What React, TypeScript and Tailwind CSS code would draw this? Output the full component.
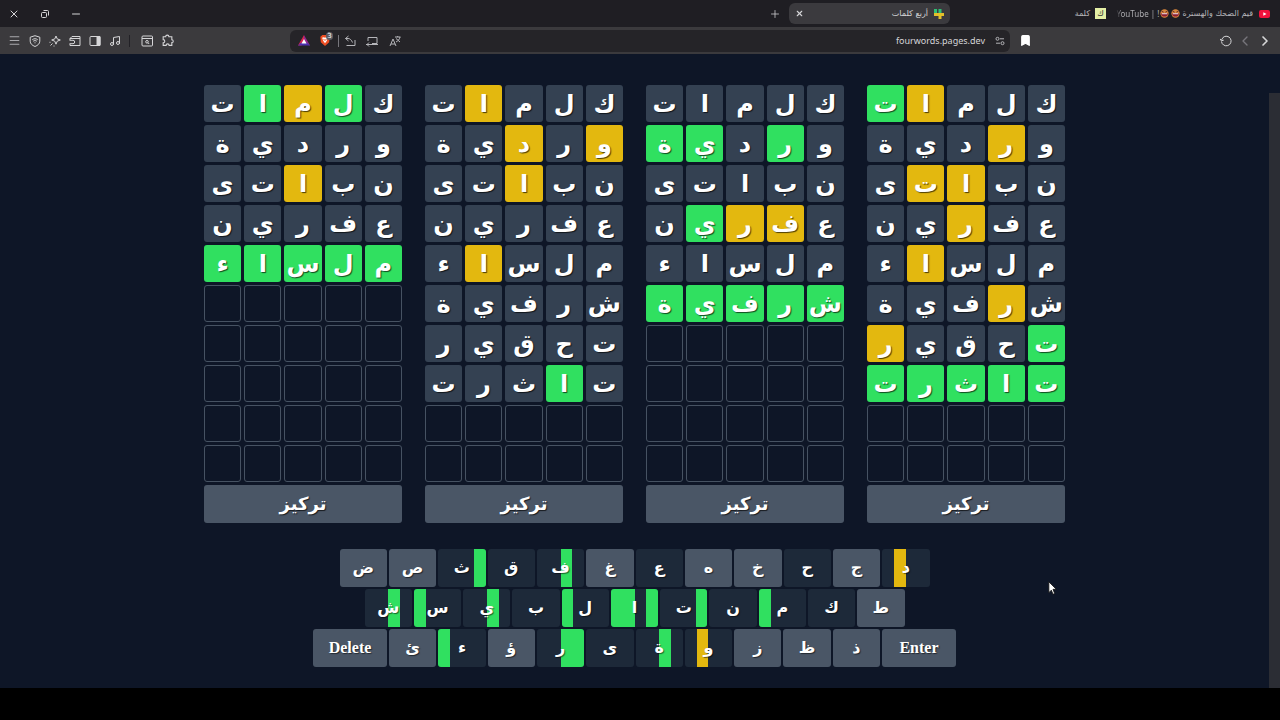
import React from 'react';
import { Bookmark, ChevronLeft, ChevronRight, Menu, Minus, Music, Plus, X } from 'lucide-react';

type Mark = 'g' | 'y' | '-';

interface BoardData {
  rows: number;
  marks: string[];
}

interface KeyData {
  label: string;
  // one entry per board quarter, left to right
  marks?: string;
}

const ROW_COUNT = 10;

const guesses = ['كلمات', 'وردية', 'نباتى', 'عفرين', 'ملساء', 'شرفية', 'تحقير', 'تاثرت'];

// Marks follow the letters of each guess, right to left on screen.
const boards: BoardData[] = [
  { rows: 8, marks: ['---yg', '-y---', '--yy-', '--y--', '---y-', '-y---', 'g---y', 'ggggg'] },
  { rows: 6, marks: ['-----', '-g-gg', '-----', '-yyg-', '-----', 'ggggg'] },
  { rows: 8, marks: ['---y-', 'y-y--', '--y--', '-----', '---y-', '-----', '-----', '-g---'] },
  { rows: 5, marks: ['-gyg-', '-----', '--y--', '-----', 'ggggg'] },
];

const keyRows: KeyData[][] = [
  [
    { label: 'د', marks: '-y--' },
    { label: 'ج' },
    { label: 'ح', marks: '----' },
    { label: 'خ' },
    { label: 'ه' },
    { label: 'ع', marks: '----' },
    { label: 'غ' },
    { label: 'ف', marks: '--g-' },
    { label: 'ق', marks: '----' },
    { label: 'ث', marks: '---g' },
    { label: 'ص' },
    { label: 'ض' },
  ],
  [
    { label: 'ط' },
    { label: 'ك', marks: '----' },
    { label: 'م', marks: 'g---' },
    { label: 'ن', marks: '----' },
    { label: 'ت', marks: '---g' },
    { label: 'ا', marks: 'gg-g' },
    { label: 'ل', marks: 'g---' },
    { label: 'ب', marks: '----' },
    { label: 'ي', marks: '--g-' },
    { label: 'س', marks: 'g---' },
    { label: 'ش', marks: '--g-' },
  ],
  [
    { label: 'Enter' },
    { label: 'ذ' },
    { label: 'ظ' },
    { label: 'ز' },
    { label: 'و', marks: '-y--' },
    { label: 'ة', marks: '--g-' },
    { label: 'ى', marks: '----' },
    { label: 'ر', marks: '--gg' },
    { label: 'ؤ' },
    { label: 'ء', marks: 'g---' },
    { label: 'ئ' },
    { label: 'Delete' },
  ],
];

const keyRowWidths = ['max-w-[590px]', 'max-w-[540px]', 'max-w-[643px]'];

const tileColors: Record<Mark, string> = {
  g: 'bg-[#30e060]',
  y: 'bg-[#e3b80f]',
  '-': 'bg-[#344152]',
};

const stripeColors: Record<Mark, string> = {
  g: 'bg-[#30e060]',
  y: 'bg-[#e3b80f]',
  '-': 'bg-transparent',
};

const LaughFace = () => (
  <svg viewBox="0 0 10 10" className="h-[9px] w-[9px] shrink-0">
    <circle cx="5" cy="5" r="4.6" fill="#d9873c" />
    <path d="M1.2 4.6h7.600a3.800 3.800 0 0 1-7.600 0z" fill="#8c1d33" />
    <path d="M2 4.800h6v1H2z" fill="#fff" />
    <path d="M1.800 2.500l2.200 1M8.200 2.500l-2.200 1" stroke="#52202a" />
  </svg>
);

const TabStrip = () => (
  <div dir="ltr" className="flex h-[27px] items-center bg-[#1f1e23] text-[#d6d6d8]">
    <div className="flex w-[90px] items-center gap-[19px] pl-2">
      <button type="button" aria-label="Close window">
        <X className="h-3 w-3" />
      </button>
      <button type="button" aria-label="Restore window">
        <svg viewBox="0 0 12 12" className="h-3 w-3" fill="none" stroke="currentColor">
          <rect x="2.5" y="4.5" width="5" height="5" rx="1" />
          <path d="M4.5 2.5h4a1 1 0 0 1 1 1v4" />
        </svg>
      </button>
      <button type="button" aria-label="Minimize window">
        <Minus className="h-3 w-3" />
      </button>
    </div>
    <div className="flex-1" />
    <button type="button" aria-label="New tab" className="mr-2">
      <Plus className="h-3 w-3" strokeWidth={1.5} />
    </button>
    <div className="flex h-[21px] w-[161px] items-center rounded-md bg-[#3b3a3e] px-[6px]">
      <button type="button" aria-label="Close tab">
        <X className="h-[9px] w-[9px]" strokeWidth={3} />
      </button>
      <span dir="rtl" className="ml-auto text-[8px]">أربع كلمات</span>
      <svg viewBox="0 0 10 10" className="ml-[6px] h-[10px] w-[10px]">
        <path d="M0 0h3v4H0zM4.500 0h3v4h-3z" fill="#2fbf74" />
        <path d="M0 4h10v3H7.500v3h-3V7H0z" fill="#e3c02a" />
      </svg>
    </div>
    <div className="flex w-[156px] items-center justify-end gap-[5px] text-[8px] text-[#b5b5b9]">
      <span dir="rtl">كلمة</span>
      <span className="flex h-[11px] w-[11px] items-center justify-center bg-[#e4efa5] text-[8px] text-[#333]">ك</span>
    </div>
    <div className="flex w-[174px] items-center justify-end pr-[10px] text-[8px] text-[#b5b5b9]">
      <span className="font-['Noto_Sans',sans-serif] whitespace-nowrap">
        <span className="bg-gradient-to-r from-[#1f1e23] to-[#b5b5b9] to-15% bg-clip-text text-transparent">YouTube |</span> !
      </span>
      <span className="ml-[1px] flex gap-[2px]">
        <LaughFace />
        <LaughFace />
      </span>
      <span dir="rtl" className="mr-[6px] ml-[2px] whitespace-nowrap">قيم الضحك والهسترة</span>
      <svg viewBox="0 0 11 8" className="h-2 w-[11px] shrink-0">
        <rect width="11" height="8" rx="2" fill="#f0123c" />
        <path d="M4.3 2.2v3.6L7.5 4z" fill="#fff" />
      </svg>
    </div>
  </div>
);

const BraveShield = () => (
  <span className="relative flex">
    <svg viewBox="0 0 12 14" className="h-[13px] w-3">
      <path d="M3.200 1h5.600l2.200 2-.5 6L6 13 1.500 9 1 3z" fill="#ee4e23" />
      <path d="M2.800 4l2-.5L6 4l1.200-.5 2 .5-1.400 3.600L6 10 4.200 7.600z" fill="#fff" />
      <path d="M4.300 5.300L6 7l1.700-1.700" stroke="#ee4e23" fill="none" />
    </svg>
    <span className="absolute -top-[2px] left-[7px] flex h-2 w-[7px] items-center justify-center rounded-sm bg-[#5d5c62] text-[7px] leading-none text-white">
      3
    </span>
  </span>
);

const Toolbar = () => (
  <div dir="ltr" className="flex h-[27px] items-center bg-[#3b3a3d] text-[#d6d6d8]">
    <div className="flex w-[290px] items-center gap-2 pl-2">
      <button type="button" aria-label="Menu">
        <Menu className="h-[13px] w-[13px] text-[#a9a9ad]" />
      </button>
      <button type="button" aria-label="VPN">
        <svg viewBox="0 0 12 12" className="h-3 w-3" fill="none" stroke="currentColor">
          <path d="M6 .7l4.800 1.500v4c0 2.500-2 4.200-4.800 5.300C3.200 10.400 1.200 8.700 1.200 6.200v-4z" />
          <path d="M3.300 4.700c1.700-1.300 3.700-1.300 5.400 0M4.200 6.200c1.200-.8 2.400-.8 3.600 0M5.500 7.800h1" />
        </svg>
      </button>
      <button type="button" aria-label="Leo AI">
        <svg viewBox="0 0 12 12" className="h-3 w-3" fill="none" stroke="currentColor">
          <path d="M7 1l1.200 2.900L11.300 5 8.200 6.200 7 9.200 5.800 6.200 2.700 5l3.100-1.100z" />
          <path d="M3.500 8.500L1.500 10.500M1 6.800v1M5 10.500v1" />
        </svg>
      </button>
      <button type="button" aria-label="Wallet">
        <svg viewBox="0 0 12 12" className="h-3 w-3" fill="none" stroke="currentColor">
          <path d="M1 5V3.500L3 1.500h8v9H1V9M1 3.500h10" />
          <path d="M.5 5.300H4a1.700 1.700 0 0 1 0 3.400H.5" />
        </svg>
      </button>
      <button type="button" aria-label="Sidebar">
        <svg viewBox="0 0 12 12" className="h-3 w-3" fill="none" stroke="currentColor">
          <rect x="1" y="1.500" width="10" height="9" rx="1" />
          <path d="M8 1.500h3v9H8z" fill="currentColor" />
        </svg>
      </button>
      <button type="button" aria-label="Playlist">
        <Music className="h-3 w-3" />
      </button>
      <span className="h-3 w-px bg-[#222126]" />
      <button type="button" aria-label="Search tabs" className="ml-[3px]">
        <svg viewBox="0 0 12 12" className="h-3 w-3" fill="none" stroke="currentColor">
          <rect x="1" y="1" width="10.500" height="10" rx="1" />
          <path d="M1 3.500h10.500" />
          <circle cx="6" cy="6.800" r="1.300" />
          <path d="M7 7.800l1.200 1.200" />
        </svg>
      </button>
      <button type="button" aria-label="Extensions">
        <svg viewBox="0 0 12 12" className="h-[13px] w-[13px]" fill="none" stroke="currentColor">
          <path d="M2 2.500h2.300a1.500 1.500 0 0 1 3 0H10v2.800a1.300 1.300 0 0 1 0 2.600v2.600H7.500a1.400 1.400 0 0 0-2.800 0H2V8.200a1.500 1.500 0 0 0 0-3z" />
        </svg>
      </button>
    </div>
    <div className="flex h-[22px] flex-1 items-center rounded-md bg-[#252428] pr-[5px] pl-2 text-[#b5b5b9]">
      <svg viewBox="0 0 12 11" className="h-[11px] w-3">
        <path d="M6 0L0 10.500h3.500L6 5z" fill="#d8264f" />
        <path d="M6 0l6 10.500-3-.7L6 5z" fill="#93278f" />
        <path d="M0 10.500h12L9 7.800H3z" fill="#4c2fae" />
        <path d="M6 4l2.500 4.500h-5z" fill="#fff" />
      </svg>
      <span className="ml-[9px]">
        <BraveShield />
      </span>
      <span className="ml-[7px] h-3 w-px bg-[#77767c]" />
      <button type="button" aria-label="Split view" className="ml-[5px]">
        <svg viewBox="0 0 12 12" className="h-3 w-3" fill="none" stroke="currentColor">
          <path d="M4.500 1L1.500 3.500l3 2.500M1.500 3.500H4c2 0 3.500 1.500 4.500 4M11 5v5.500H2.500" />
        </svg>
      </button>
      <button type="button" aria-label="Cast" className="ml-[10px]">
        <svg viewBox="0 0 12 12" className="h-3 w-3" fill="none" stroke="currentColor">
          <path d="M2 6V2.500h9v6H6M0 9.500h12M3 7.500l-2 2 2 2" />
        </svg>
      </button>
      <button type="button" aria-label="Translate" className="ml-[11px]">
        <svg viewBox="0 0 12 12" className="h-3 w-3" fill="none" stroke="currentColor">
          <path d="M1 11l3-7 3 7M2 9h4M6 2h5.500M8.700 1v1M7 3.500l4 3.500M11 2c-.5 2.500-2 4-4 5" />
        </svg>
      </button>
      <span className="ml-auto font-['Noto_Sans',sans-serif] text-[9px] text-[#d6d6d8]">fourwords.pages.dev</span>
      <button type="button" aria-label="Site settings" className="ml-[10px]">
        <svg viewBox="0 0 10 10" className="h-[10px] w-[10px]" fill="none" stroke="currentColor">
          <circle cx="2.500" cy="2.800" r="1.500" />
          <path d="M5 2.800h4M1 7.200h4" />
          <circle cx="7.500" cy="7.200" r="1.500" />
        </svg>
      </button>
    </div>
    <div className="flex w-[270px] items-center pr-[7px] pl-[9px]">
      <button type="button" aria-label="Bookmark">
        <Bookmark className="h-[13px] w-[13px] fill-white text-white" />
      </button>
      <button type="button" aria-label="Reload" className="ml-auto">
        <svg viewBox="0 0 12 12" className="h-3 w-3" fill="none" stroke="currentColor">
          <path d="M1.500 6.500A4.800 4.800 0 1 0 3 2.500L1.500 5" />
          <path d="M0 3.800l1.300 2 2.400-.6" />
        </svg>
      </button>
      <button type="button" aria-label="Forward" className="ml-[5px] text-[#77767c]">
        <ChevronLeft className="h-4 w-4" />
      </button>
      <button type="button" aria-label="Back" className="ml-[4px]">
        <ChevronRight className="h-4 w-4" strokeWidth={2.5} />
      </button>
    </div>
  </div>
);

const Tile = ({ letter, mark }: { letter?: string; mark?: Mark }) => {
  if (!letter || !mark) {
    return <div className="h-[37px] rounded-[3px] border border-[#465262]" />;
  }
  return (
    <div
      className={`flex h-[37px] items-center justify-center rounded-[3px] text-2xl font-bold text-white [text-shadow:1px_1px_1px_#000a] ${tileColors[mark]}`}
    >
      {letter}
    </div>
  );
};

const Board = ({ rows, marks }: BoardData) => (
  <section className="w-[198px]">
    <div className="grid grid-cols-5 gap-[3px]">
      {Array.from({ length: ROW_COUNT * 5 }, (_, i) => {
        const row = Math.floor(i / 5);
        const col = i % 5;
        if (row >= rows) {
          return <Tile key={i} />;
        }
        return <Tile key={i} letter={guesses[row][col]} mark={marks[row][col] as Mark} />;
      })}
    </div>
    <button
      type="button"
      className="mt-[3px] flex h-[38px] w-full items-center justify-center rounded-[3px] bg-[#4a5666] text-lg font-bold text-white [text-shadow:1px_1px_1px_#000a]"
    >
      تركيز
    </button>
  </section>
);

const Key = ({ label, marks }: KeyData) => {
  const wide = label.length > 1;
  return (
    <button
      type="button"
      className={`relative h-[38px] overflow-hidden rounded-[3px] text-base font-bold text-white ${
        wide ? "w-[74px] font-['Liberation_Serif',serif]" : 'flex-1'
      } ${marks ? 'bg-[#1d2939]' : 'bg-[#4a5666]'}`}
    >
      {marks && (
        <span dir="ltr" className="absolute inset-0 grid grid-cols-4">
          {marks.split('').map((mark, i) => (
            <span key={i} className={stripeColors[mark as Mark]} />
          ))}
        </span>
      )}
      <span className="relative [text-shadow:1px_1px_1px_#0008]">{label}</span>
    </button>
  );
};

const Keyboard = () => (
  <div className="mt-[26px] flex flex-col items-center gap-[2px]">
    {keyRows.map((row, i) => (
      <div key={i} className={`flex w-full gap-[2px] ${keyRowWidths[i]}`}>
        {row.map((item) => (
          <Key key={item.label} {...item} />
        ))}
      </div>
    ))}
  </div>
);

const App = () => {
  return (
    <div dir="rtl" className="flex min-h-screen flex-col bg-black font-['DejaVu_Sans',sans-serif]">
      <TabStrip />
      <Toolbar />
      <div dir="ltr" className="flex flex-1 bg-[#0e1627]">
        <main dir="rtl" className="flex-1 pt-[31px]">
          <div className="flex justify-center gap-[23px]">
            {boards.map((board, i) => (
              <Board key={i} {...board} />
            ))}
          </div>
          <Keyboard />
        </main>
        <div className="flex w-[11px] pt-[39px]">
          <div className="flex-1 bg-[#2b2d34]" />
        </div>
      </div>
      <div className="h-8" />
      <svg viewBox="0 0 12 18" className="absolute top-[581px] left-[1048px] h-[15px] w-[10px]">
        <path d="M1 1v13l3-3 2 5 2-1-2-5h4z" fill="#fff" stroke="#111" />
      </svg>
    </div>
  );
};

export default App;
